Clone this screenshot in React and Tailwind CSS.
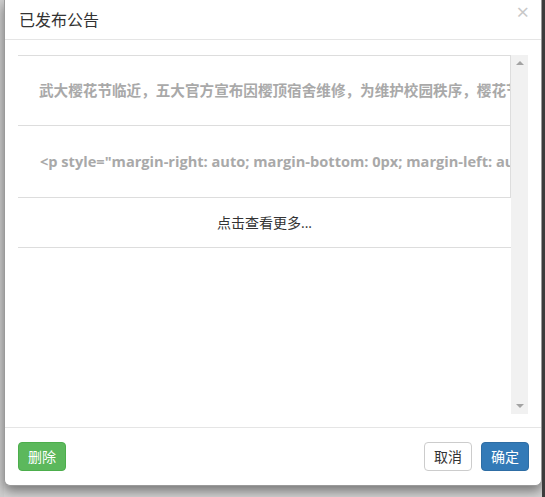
export default function App() {
  const font = { fontFamily: '"Open Sans", "Noto Sans CJK SC", sans-serif' };
  return (
    <div className="flex h-[497px] w-[545px] overflow-hidden bg-[#d4d4d4]" style={font}>
      <div className="w-[4px] shrink-0 bg-[#cfcfcf]" />
      <div className="flex w-[538px] shrink-0 flex-col">
        <div className="flex h-[486px] flex-col rounded-b-[6px] border border-t-0 border-[#9a9a9a] bg-white shadow-[0_5px_12px_rgba(0,0,0,0.45)]">
          {/* header */}
          <div className="relative flex h-[40px] shrink-0 items-center border-b border-[#e5e5e5] px-[14px]">
            <h4 className="text-[16px] leading-none text-[#333]">已发布公告</h4>
            <span className="absolute right-[12px] top-[0px] text-[22px] leading-[22px] text-[#c8c8c8]">×</span>
          </div>

          {/* body */}
          <div className="flex-1 px-[13px] pb-[13px] pt-[15px]">
            <div className="flex h-[359px]">
              <div className="flex-1 overflow-hidden">
                <div className="border-r border-t border-[#dddddd] text-[14.6px] font-bold text-[#a9a9a9]">
                  <div className="flex h-[70px] items-center overflow-hidden whitespace-nowrap border-b border-[#dddddd] pl-[21px]">
                    武大樱花节临近，五大官方宣布因樱顶宿舍维修，为维护校园秩序，樱花节期间禁止校外人员入校
                  </div>
                  <div className="flex h-[72px] items-center overflow-hidden whitespace-nowrap border-b border-[#dddddd] pl-[22px]">
                    &lt;p style="margin-right: auto; margin-bottom: 0px; margin-left: auto;"&gt;
                  </div>
                </div>
                <div className="flex h-[50px] items-center justify-center border-b border-[#dddddd] text-[14px] text-[#333]">
                  点击查看更多...
                </div>
              </div>
              <div className="flex w-[17px] shrink-0 flex-col items-center justify-between bg-[#f1f1f1] py-[6px]">
                <span className="h-0 w-0 border-x-[4px] border-b-[4px] border-x-transparent border-b-[#a3a3a3]" />
                <span className="h-0 w-0 border-x-[4px] border-t-[4px] border-x-transparent border-t-[#a3a3a3]" />
              </div>
            </div>
          </div>

          {/* footer */}
          <div className="flex h-[58px] shrink-0 items-center justify-between border-t border-[#e5e5e5] pl-[13px] pr-[12px]">
            <button className="h-[29px] rounded-[4px] border border-[#4cae4c] bg-[#5cb85c] px-[9px] text-[14px] text-white">删除</button>
            <div className="flex gap-[9px]">
              <button className="h-[29px] rounded-[4px] border border-[#cccccc] bg-white px-[9px] text-[14px] text-[#333]">取消</button>
              <button className="h-[29px] rounded-[4px] border border-[#2e6da4] bg-[#337ab7] px-[9px] text-[14px] text-white">确定</button>
            </div>
          </div>
        </div>
      </div>
      <div className="flex-1 bg-[#3c3c3c]" />
    </div>
  );
}
